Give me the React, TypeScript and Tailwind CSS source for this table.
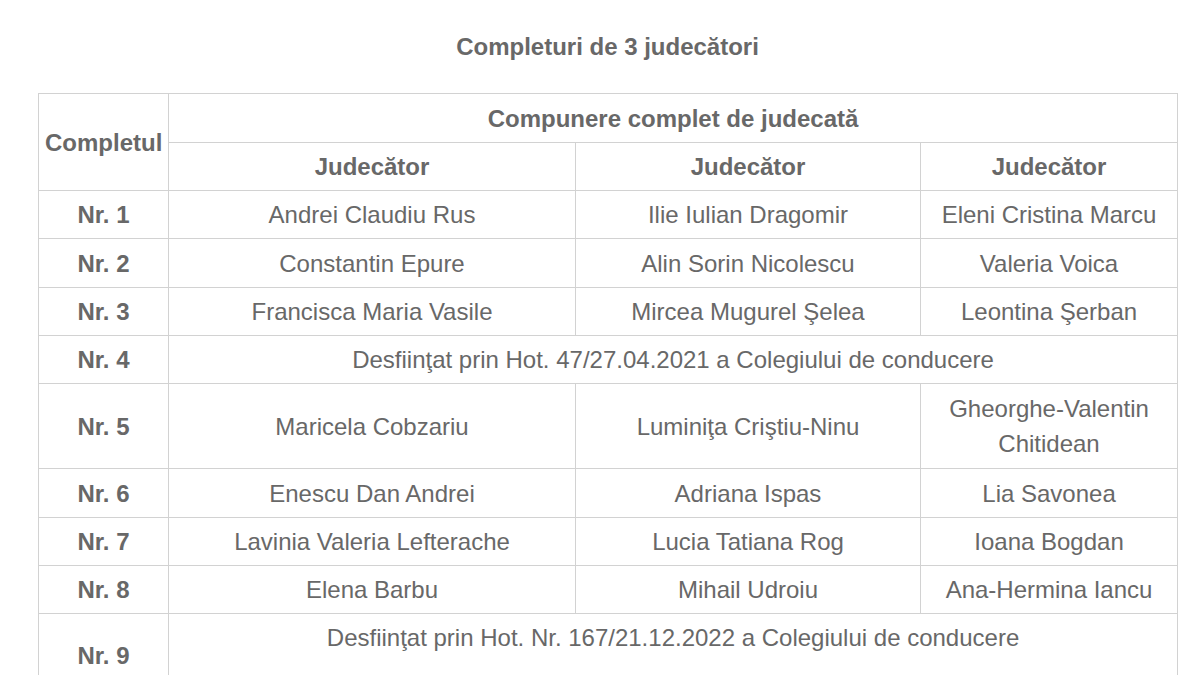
const rows: { nr: string; judges?: [string, string, string]; note?: string; tall?: boolean; h?: string }[] = [
  { nr: "Nr. 1", judges: ["Andrei Claudiu Rus", "Ilie Iulian Dragomir", "Eleni Cristina Marcu"] },
  { nr: "Nr. 2", judges: ["Constantin Epure", "Alin Sorin Nicolescu", "Valeria Voica"], h: "h-[49px]" },
  { nr: "Nr. 3", judges: ["Francisca Maria Vasile", "Mircea Mugurel Şelea", "Leontina Şerban"] },
  { nr: "Nr. 4", note: "Desfiinţat prin Hot. 47/27.04.2021 a Colegiului de conducere" },
  { nr: "Nr. 5", judges: ["Maricela Cobzariu", "Luminiţa Criştiu-Ninu", "Gheorghe-Valentin Chitidean"], h: "h-[85px]" },
  { nr: "Nr. 6", judges: ["Enescu Dan Andrei", "Adriana Ispas", "Lia Savonea"], h: "h-[49px]" },
  { nr: "Nr. 7", judges: ["Lavinia Valeria Lefterache", "Lucia Tatiana Rog", "Ioana Bogdan"] },
  { nr: "Nr. 8", judges: ["Elena Barbu", "Mihail Udroiu", "Ana-Hermina Iancu"] },
  { nr: "Nr. 9", note: "Desfiinţat prin Hot. Nr. 167/21.12.2022 a Colegiului de conducere", tall: true },
];

const cell = "border border-[#d2d2d2] px-[6px] py-[6px] text-center align-middle";

export default function App() {
  return (
    <div className="h-[675px] w-[1200px] overflow-hidden bg-white font-['Liberation_Sans',Arial,sans-serif] text-[24px] leading-[35px] text-[#686868]">
      <div className="ml-[38px] w-[1139px]">
        <h2 className="pt-[29px] pb-[29px] text-center font-bold">Completuri de 3 judecători</h2>
        <table className="w-[1139px] table-fixed border-collapse">
          <colgroup>
            <col className="w-[130px]" />
            <col className="w-[407px]" />
            <col className="w-[345px]" />
            <col className="w-[257px]" />
          </colgroup>
          <thead>
            <tr className="h-[49px]">
              <th rowSpan={2} className={`${cell} px-0 font-bold`}>Completul</th>
              <th colSpan={3} className={`${cell} font-bold`}>Compunere complet de judecată</th>
            </tr>
            <tr>
              <th className={`${cell} font-bold`}>Judecător</th>
              <th className={`${cell} font-bold`}>Judecător</th>
              <th className={`${cell} font-bold`}>Judecător</th>
            </tr>
          </thead>
          <tbody>
            {rows.map((r) => (
              <tr key={r.nr} className={r.h}>
                <td className={`${cell} font-bold`}>{r.nr}</td>
                {r.judges ? (
                  r.judges.map((j) => (
                    <td key={j} className={cell}>
                      {j}
                    </td>
                  ))
                ) : (
                  <td colSpan={3} className={`${cell} ${r.tall ? "align-top" : ""}`}>
                    <p>{r.note}</p>
                    {r.tall && <p className="h-[35px]" />}
                  </td>
                )}
              </tr>
            ))}
          </tbody>
        </table>
      </div>
    </div>
  );
}
